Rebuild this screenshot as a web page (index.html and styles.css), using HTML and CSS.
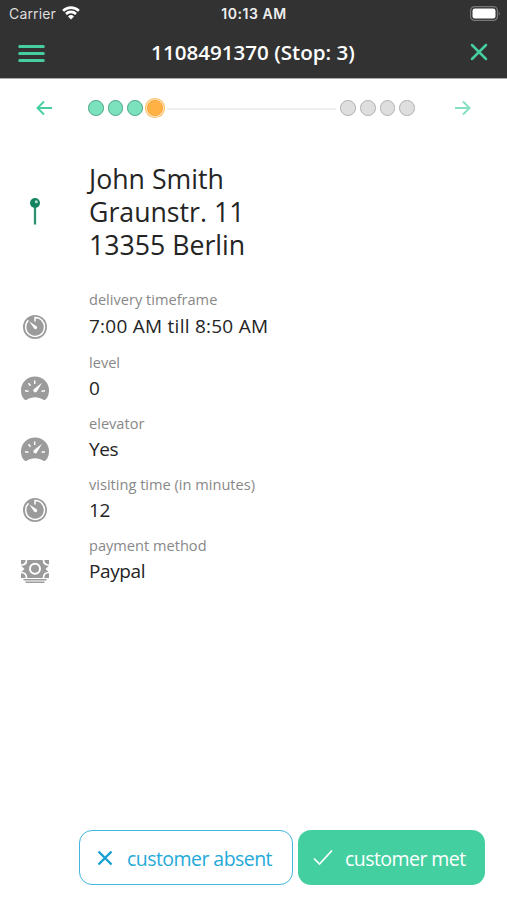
FILE: index.html
```html
<!DOCTYPE html>
<html lang="en">
<head>
<meta charset="utf-8">
<title>Stop details</title>
<link rel="stylesheet" href="styles.css">
</head>
<body>
<svg class="defs" width="0" height="0" aria-hidden="true">
  <symbol id="timer" viewBox="0 0 28 28">
    <circle cx="14" cy="14" r="12" fill="#9b9b9b"/>
    <path d="M14 8.500V4.600A9.400 9.400 0 1 1 7.400 7.400" fill="none" stroke="#fff" stroke-width="1.500"/>
    <path d="M8.300 8.500l7.300 4.800a1.700 1.700 0 0 1-2.300 2.500z" fill="#fff"/>
  </symbol>
  <symbol id="gauge" viewBox="0 0 28 28">
    <path d="M3.800 25.800C1.200 23.600 0 20 0 16.400A14 14 0 0 1 28 16.400c0 3.600-1.200 7.200-3.800 9.400-.6.400-1.200.4-1.800 0-4.800-3.500-12-3.500-16.800 0-.6.400-1.200.4-1.800 0z" fill="#9b9b9b"/>
    <path d="M4 16.800l3.500.4M7.500 9.300l2 2.500M13.700 6.500v3.500M24 16.800l-3.500.4" stroke="#fff" stroke-width="1.500"/>
    <path d="M21 8.800l-5 8.500a1.900 1.900 0 1 1-2.600-2.500z" fill="#fff"/>
  </symbol>
</svg>
<header class="header">
  <div class="status">
    <div class="carrier">Carrier
      <svg width="18" height="14" viewBox="0 0 18 14"><path d="M1.100 4.900a11.200 11.200 0 0 1 15.800 0M4 8a7 7 0 0 1 10 0" fill="none" stroke="#fff" stroke-width="2.600"/><path d="M9 13.500l-3-3a4.300 4.300 0 0 1 6 0z" fill="#fff"/></svg>
    </div>
    <div class="clock">10:13 AM</div>
    <svg class="battery" width="31" height="15" viewBox="0 0 31 15"><rect x=".6" y=".6" width="26.800" height="13.800" rx="4" fill="none" stroke="#777" stroke-width="1.200"/><rect x="2.500" y="2.500" width="23" height="10" rx="2.300" fill="#fff"/><path d="M28.700 5.200q2 2.300 0 4.600z" fill="#777"/></svg>
  </div>
  <div class="navbar">
    <svg class="menu" width="27" height="20" viewBox="0 0 27 20"><path d="M1.700 2.500h23.600M1.700 9.500h23.600M1.700 16.500h23.600" stroke="#45cfa0" stroke-width="3" stroke-linecap="round"/></svg>
    <h1 class="title">1108491370 (Stop: 3)</h1>
    <svg class="close" width="18" height="18" viewBox="0 0 18 18"><path d="M2 2l14 14M16 2L2 16" stroke="#45cfa0" stroke-width="2.500" stroke-linecap="round"/></svg>
  </div>
</header>
<nav class="progress">
  <svg width="17" height="16" viewBox="0 0 17 16"><path d="M16 8H1.500M8 1.500L1.500 8 8 14.500" fill="none" stroke="#45cfa0" stroke-width="1.900"/></svg>
  <div class="track">
    <i class="dot done"></i><i class="dot done"></i><i class="dot done"></i><i class="dot current"></i>
    <span class="line"></span>
    <i class="dot"></i><i class="dot"></i><i class="dot"></i><i class="dot"></i>
  </div>
  <svg class="next" width="17" height="16" viewBox="0 0 17 16"><path d="M1 8h14.500M9 1.500L15.500 8 9 14.500" fill="none" stroke="#45cfa0" stroke-width="1.900"/></svg>
</nav>
<main class="details">
  <section class="address">
    <svg width="12" height="30" viewBox="0 0 12 30"><path d="M6 9v18.500" stroke="#2b9170" stroke-width="2.300"/><circle cx="6" cy="6" r="5" fill="#148562"/><circle cx="7.300" cy="4.700" r="1.500" fill="#b9ddd0"/></svg>
    <p class="lines">John Smith<br>Graunstr. 11<br>13355 Berlin</p>
  </section>
  <section class="row"><svg class="icon"><use href="#timer"/></svg><div><p class="label">delivery timeframe</p><p class="value wide">7:00 AM till 8:50 AM</p></div></section>
  <section class="row"><svg class="icon"><use href="#gauge"/></svg><div><p class="label">level</p><p class="value">0</p></div></section>
  <section class="row"><svg class="icon"><use href="#gauge"/></svg><div><p class="label">elevator</p><p class="value">Yes</p></div></section>
  <section class="row"><svg class="icon"><use href="#timer"/></svg><div><p class="label">visiting time (in minutes)</p><p class="value">12</p></div></section>
  <section class="row">
    <svg class="icon" viewBox="0 0 28 28">
      <path d="M0 3h28v18H0z" fill="#9b9b9b"/>
      <path d="M5.500 3c0 3-2 5-5.500 5M22.500 3c0 3 2 5 5.500 5M5.500 21c0-4-2-5.500-5.500-5.500M22.500 21c0-4 2-5.500 5.500-5.500" fill="none" stroke="#fff" stroke-width="1.700"/>
      <path d="M0 8.500l3.500 3.500L0 15.500zM28 8.500L24.500 12l3.500 3.500z" fill="#fff"/>
      <circle cx="14" cy="11.700" r="5" fill="none" stroke="#fff" stroke-width="2"/>
      <path d="M2.500 22.700h23M4.500 25.200h19" stroke="#9b9b9b" stroke-width="1.500"/>
    </svg>
    <div><p class="label">payment method</p><p class="value">Paypal</p></div>
  </section>
</main>
<footer class="actions">
  <button class="button absent"><svg width="16" height="16" viewBox="0 0 16 16"><path d="M1.500 1.500l13 13M14.500 1.500l-13 13" stroke="#159fd3" stroke-width="2.400"/></svg><span>customer absent</span></button>
  <button class="button met"><svg width="20" height="17" viewBox="0 0 20 17"><path d="M1 9.500l5.500 5.500L19 1.500" fill="none" stroke="#fff" stroke-width="1.700"/></svg><span>customer met</span></button>
</footer>
</body>
</html>
```
FILE: styles.css
```css
* { box-sizing: border-box; }
body { margin: 0; width: 507px; height: 900px; display: flex; flex-direction: column; background: #fff; color: #242424; font-family: "Open Sans", sans-serif; overflow: hidden; }
p, h1 { margin: 0; }
svg { display: block; flex: none; }
.defs { position: absolute; }
.header { height: 79px; background: #323232; border-bottom: 1px solid #aaa; color: #fff; flex: none; }
.status { height: 27px; display: grid; grid-template-columns: 1fr auto 1fr; align-items: center; padding: 0 6px 0 7px; font-family: Inter, sans-serif; font-size: 14px; }
.carrier { display: flex; align-items: center; gap: 6px; letter-spacing: .15px; color: #ddd; padding-left: 2px; }
.carrier svg { margin-top: -2px; }
.clock { font-weight: 600; letter-spacing: .55px; color: #eee; }
.battery { justify-self: end; }
.navbar { height: 51px; display: flex; align-items: center; justify-content: space-between; padding: 0 19px 0 18px; }
.menu { margin-top: 2px; }
.title { font-size: 20.600px; line-height: 28px; margin-top: -2px; font-weight: 600; white-space: nowrap; }
.close { margin: -1px 0 0 9px; }
.progress { height: 58px; display: flex; align-items: center; justify-content: space-between; padding: 0 36px; flex: none; }
.next { opacity: .65; }
.track { width: 326.600px; margin-left: -4px; display: flex; align-items: center; gap: 4px; }
.dot { width: 15.600px; height: 15.600px; border-radius: 50%; flex: none; background: #dedede; border: 1.500px solid #b1b1b1; }
.done { background: #7be2bd; border-color: #4ca584; }
.current { background: #ffb143; border: 1px solid #f5a33a; box-shadow: 0 0 0 1px #ffe4b9, 0 0 0 2px #ffbf68; }
.line { flex: 1; height: 2px; background: #eee; margin: 2px 0 0; }
.details { flex: 1; padding-top: 25px; }
.address { display: grid; grid-template-columns: 70px 1fr; align-items: center; padding-right: 20px; height: 99px; margin-bottom: 26px; }
.address svg { justify-self: center; }
.address, .row { column-gap: 19px; }
.lines { font-size: 26.700px; line-height: 33px; }
.row { display: grid; grid-template-columns: 70px 1fr; height: 61px; }
.address + .row { height: 63px; }
.icon { width: 28px; height: 28px; margin: 24px 0 0 21px; }
.address + .row .icon { margin-top: 26px; }
.label { font-size: 14.600px; line-height: 24px; color: #888; }
.value { font-size: 19px; line-height: 28px; letter-spacing: -.4px; }
.wide { letter-spacing: .25px; padding-top: 1px; }
.actions { display: flex; gap: 5px; height: 70px; padding: 0 22px 15px 79px; flex: none; }
.button { height: 55px; border-radius: 13px; display: flex; align-items: center; font: 19.500px "Open Sans", sans-serif; letter-spacing: -.55px; padding: 0; white-space: nowrap; }
.button span { padding-top: 1px; }
.absent { width: 214px; color: #24a9da; background: #fff; border: 1.500px solid #43b5df; padding-left: 17px; gap: 14px; }
.met { width: 187px; color: #fff; background: #43cf9f; border: 0; padding-left: 15px; gap: 12px; }
```
